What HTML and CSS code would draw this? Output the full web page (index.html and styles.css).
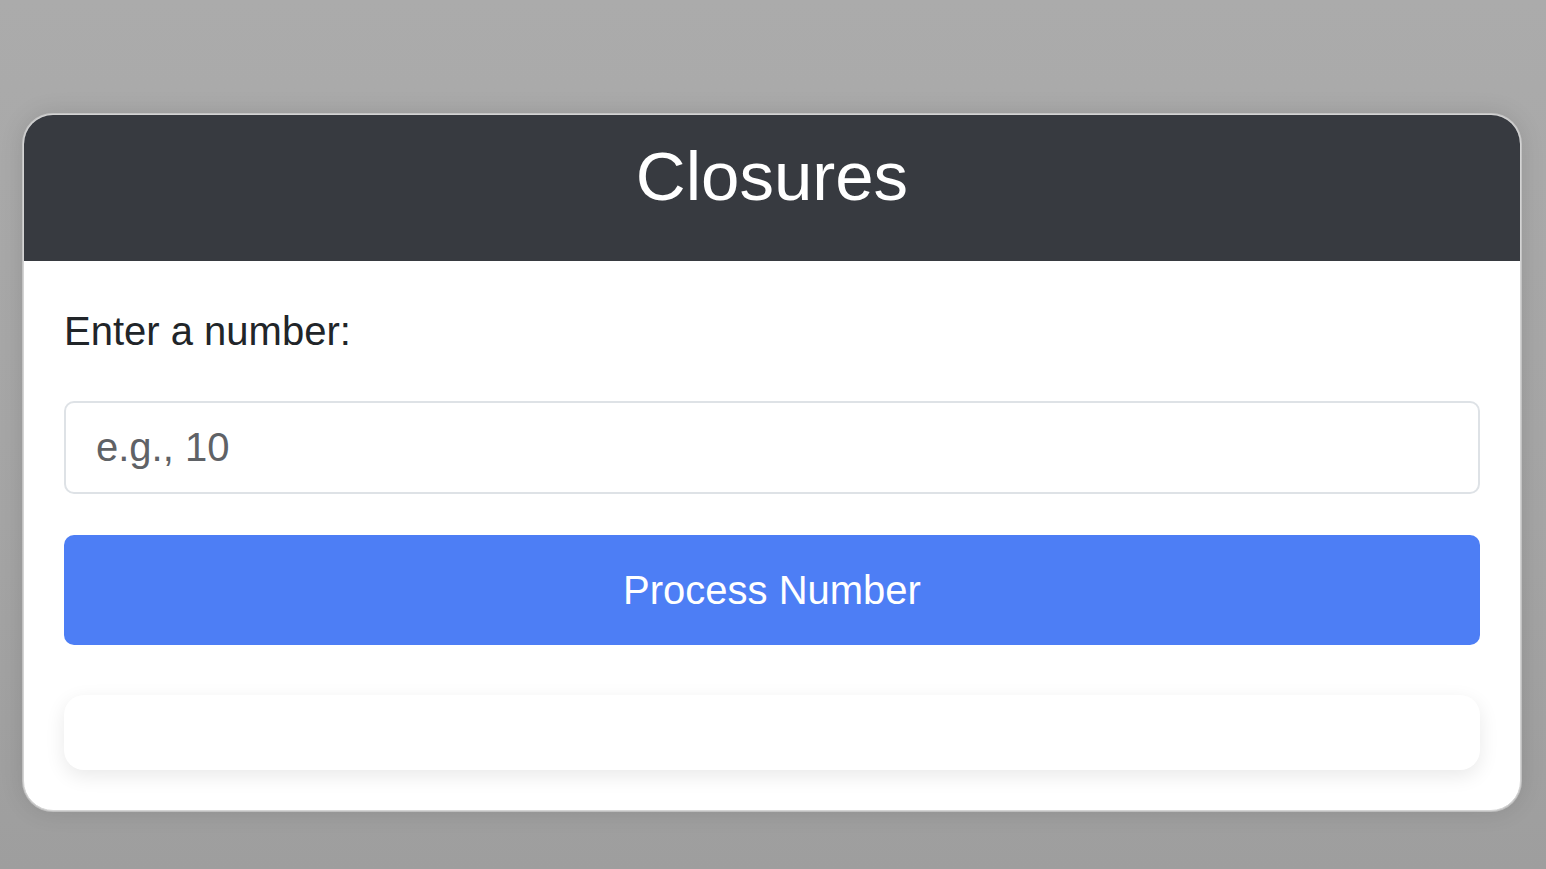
FILE: index.html
```html
<!DOCTYPE html>
<html lang="en">
<head>
<meta charset="utf-8">
<title>Closures</title>
<link rel="stylesheet" href="styles.css">
</head>
<body>
<div class="page">
  <div class="card">
    <div class="card-header">
      <h1 class="title">Closures</h1>
    </div>
    <div class="card-body">
      <label class="label" for="num">Enter a number:</label>
      <input class="input" id="num" type="number" placeholder="e.g., 10">
      <button class="btn" type="button">Process Number</button>
      <div class="result"></div>
    </div>
  </div>
</div>
</body>
</html>
```

FILE: styles.css
```css
html, body {
  margin: 0;
  padding: 0;
  height: 100%;
}
body {
  font-family: "Liberation Sans", Arial, sans-serif;
  background: linear-gradient(180deg, #ababab 0%, #a5a5a5 60%, #9e9e9e 100%);
  overflow: hidden;
}
.page {
  padding: 114px 25px 0 23px;
}
.card {
  border: 1px solid #d4d4d4;
  border-radius: 30px;
  overflow: hidden;
  background: #fff;
  box-shadow: 0 0 0 1px rgba(220, 220, 220, 0.6), 0 0 24px rgba(0, 0, 0, 0.12);
}
.card-header {
  background: #373a40;
  height: 146px;
  box-sizing: border-box;
  padding-top: 22px;
}
.title {
  margin: 0;
  color: #fff;
  font-weight: 400;
  font-size: 69px;
  line-height: 79px;
  text-align: center;
}
.card-body {
  display: flex;
  flex-direction: column;
  padding: 46px 40px 40px;
}
.label {
  font-size: 40px;
  line-height: 48px;
  color: #212529;
  margin-bottom: 46px;
}
.input {
  height: 93px;
  box-sizing: border-box;
  border: 2px solid #dee2e6;
  border-radius: 10px;
  padding: 0 30px;
  font-family: inherit;
  font-size: 40px;
  color: #212529;
  outline: none;
  margin: 0 0 41px;
}
.input::placeholder {
  color: #5f6266;
}
.input::-webkit-outer-spin-button,
.input::-webkit-inner-spin-button {
  -webkit-appearance: none;
  margin: 0;
}
.btn {
  height: 110px;
  border: none;
  border-radius: 10px;
  background: #4d7ef5;
  color: #fff;
  font-family: inherit;
  font-size: 40px;
  margin: 0 0 50px;
  padding: 0;
}
.result {
  height: 75px;
  border-radius: 20px;
  background: #fff;
  box-shadow: 0 6px 20px rgba(0, 0, 0, 0.09);
}
```
